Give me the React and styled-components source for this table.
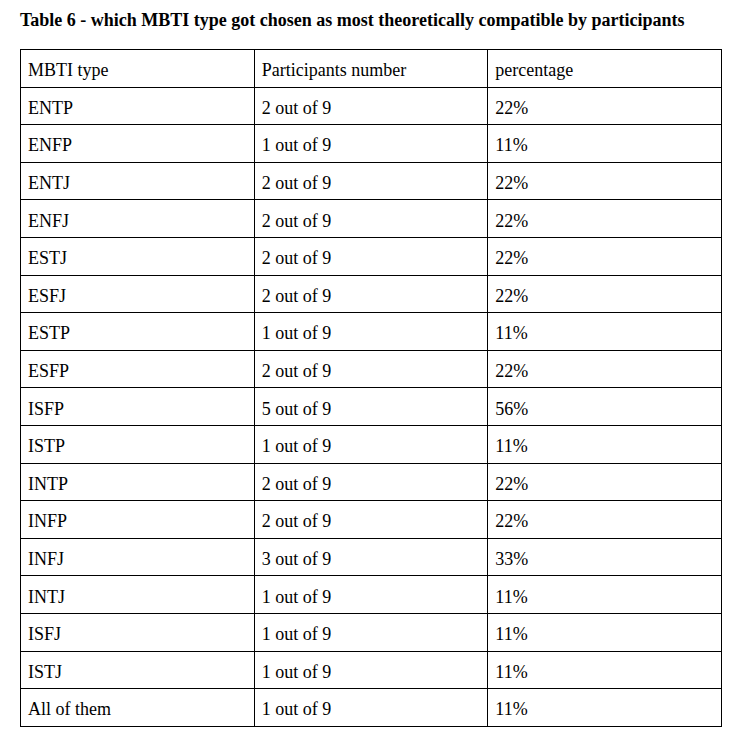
import React from 'react';
import styled, { createGlobalStyle } from 'styled-components';

const GlobalStyle = createGlobalStyle`
  body {
    margin: 0;
    background: #ffffff;
    font-family: "Liberation Serif", "Times New Roman", serif;
    color: #000000;
  }
`;

const Page = styled.div`
  padding: 10px 9px 0 20px;
  width: 731px;
  box-sizing: border-box;
`;

const Caption = styled.h2`
  margin: 0 0 19px 0;
  font-size: 18px;
  line-height: 20px;
  font-weight: bold;
  white-space: nowrap;
`;

const Table = styled.table`
  border-collapse: collapse;
  width: 702px;
  table-layout: fixed;
`;

const Cell = styled.td`
  border: 1px solid #000000;
  height: 37.6px;
  padding: 4px 7px 0 7px;
  box-sizing: border-box;
  font-size: 18px;
  line-height: 20px;
  vertical-align: middle;
  text-align: left;
  font-weight: normal;
`;

const rows = [
  ['ENTP', 2, '22%'],
  ['ENFP', 1, '11%'],
  ['ENTJ', 2, '22%'],
  ['ENFJ', 2, '22%'],
  ['ESTJ', 2, '22%'],
  ['ESFJ', 2, '22%'],
  ['ESTP', 1, '11%'],
  ['ESFP', 2, '22%'],
  ['ISFP', 5, '56%'],
  ['ISTP', 1, '11%'],
  ['INTP', 2, '22%'],
  ['INFP', 2, '22%'],
  ['INFJ', 3, '33%'],
  ['INTJ', 1, '11%'],
  ['ISFJ', 1, '11%'],
  ['ISTJ', 1, '11%'],
  ['All of them', 1, '11%'],
];

export default function App() {
  return (
    <Page>
      <GlobalStyle />
      <Caption>Table 6 - which MBTI type got chosen as most theoretically compatible by participants</Caption>
      <Table>
        <tbody>
          <tr>
            <Cell>MBTI type</Cell>
            <Cell>Participants number</Cell>
            <Cell>percentage</Cell>
          </tr>
          {rows.map(([type, count, pct]) => (
            <tr key={type}>
              <Cell>{type}</Cell>
              <Cell>{count} out of 9</Cell>
              <Cell>{pct}</Cell>
            </tr>
          ))}
        </tbody>
      </Table>
    </Page>
  );
}
